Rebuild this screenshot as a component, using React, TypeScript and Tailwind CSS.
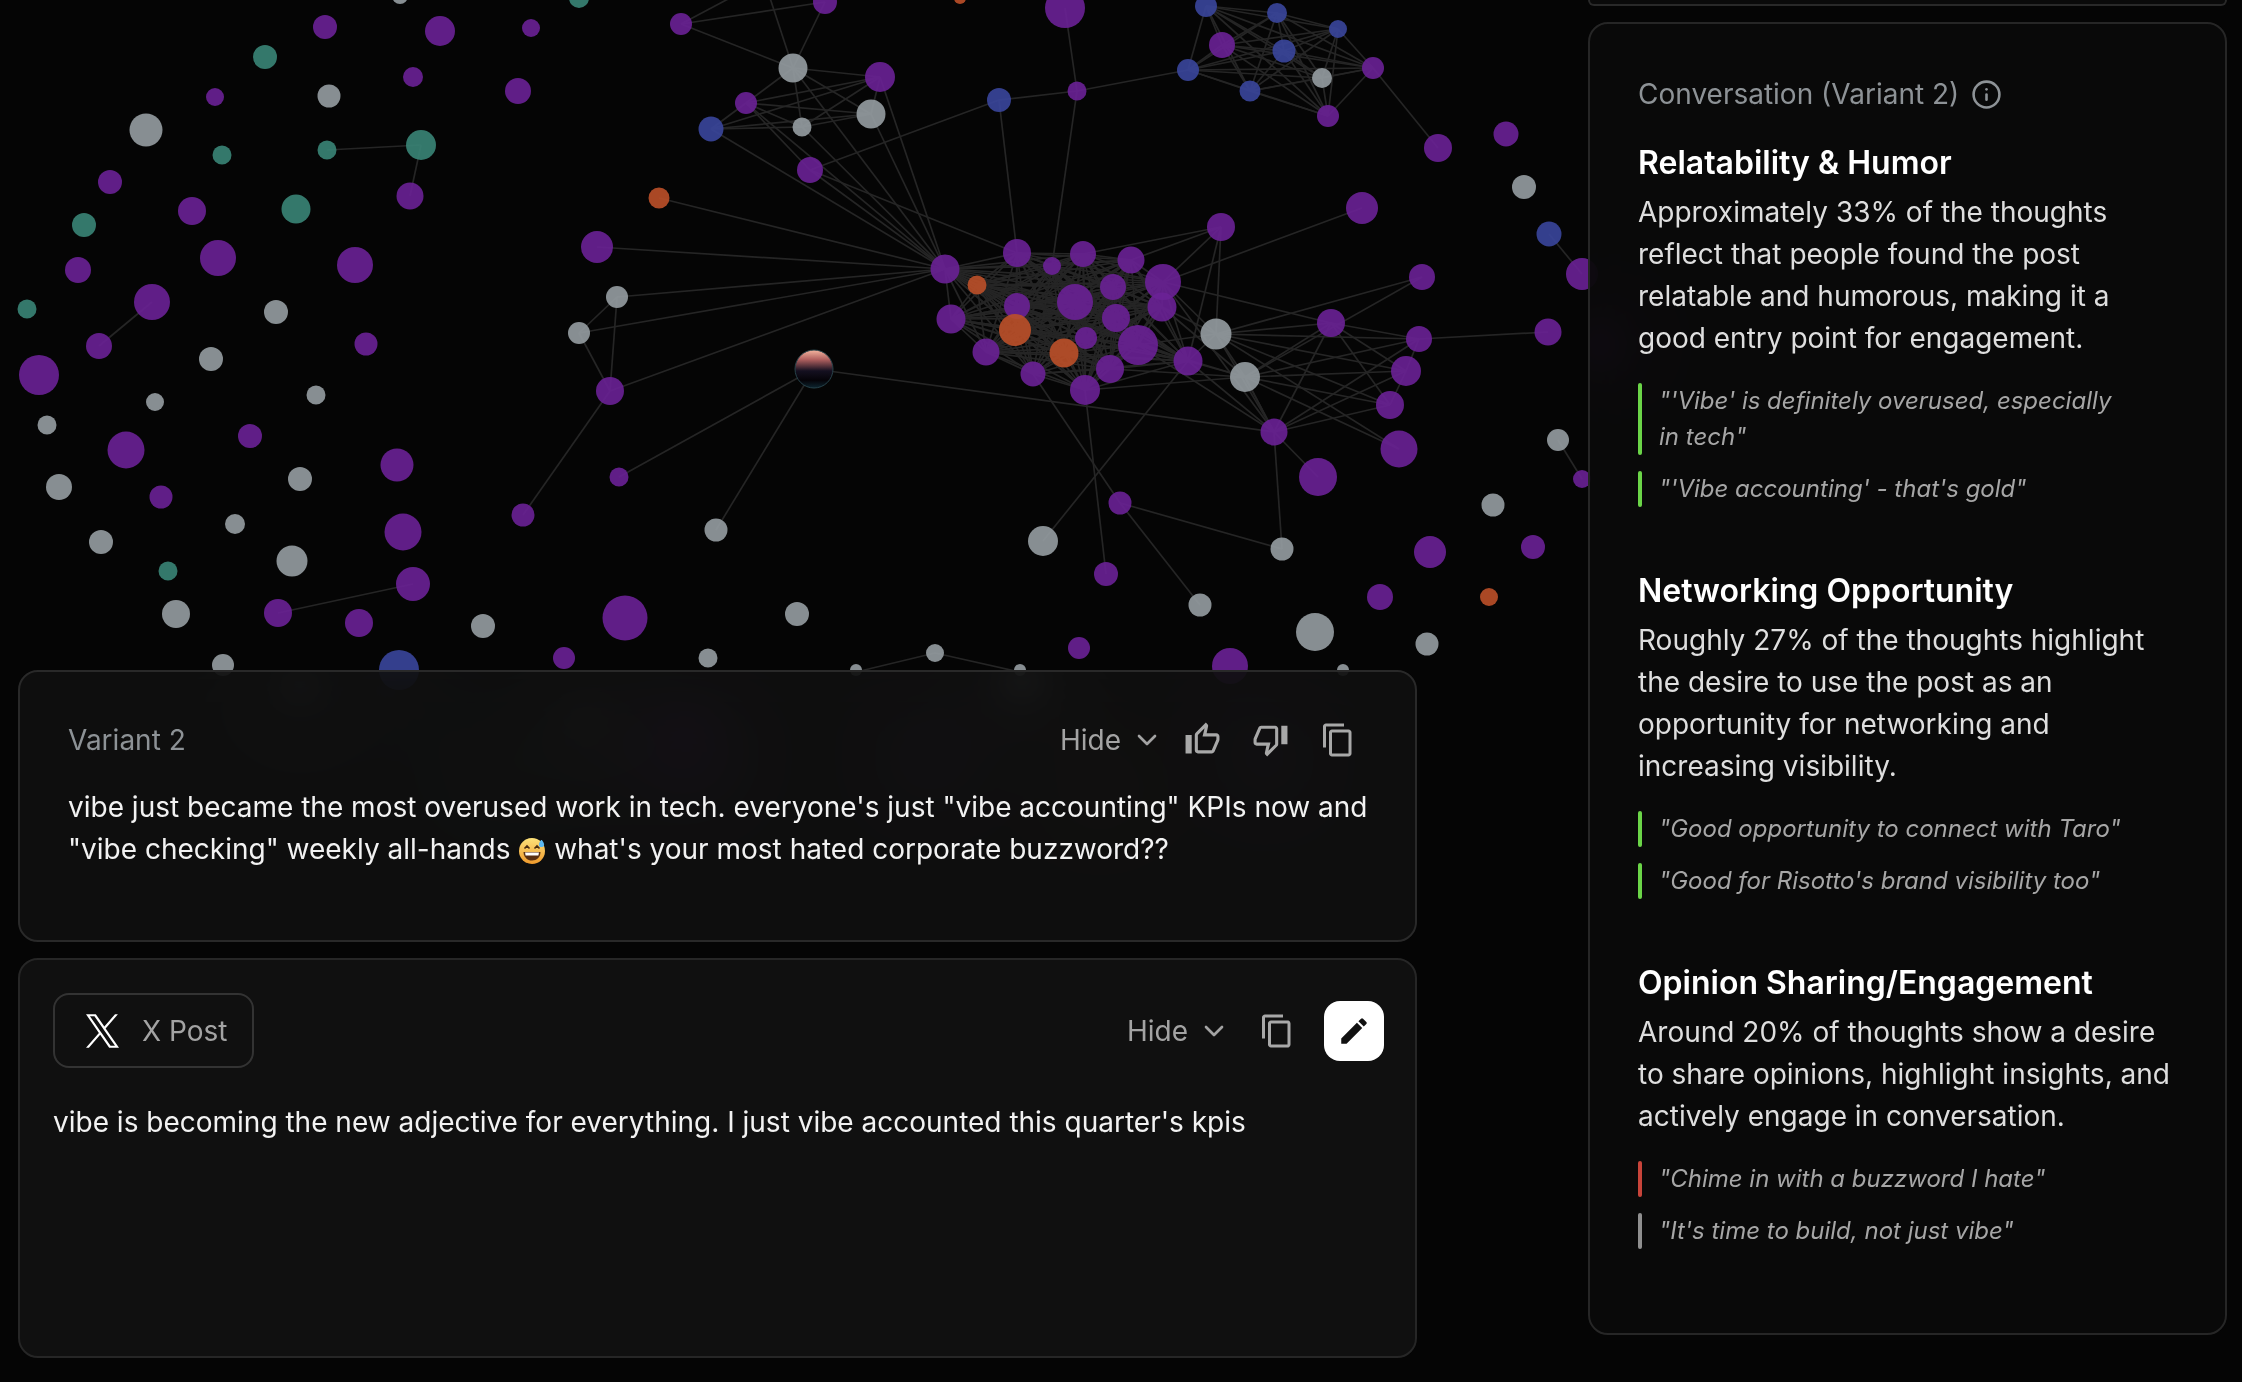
import { ChevronDown, Info } from "lucide-react";
import {
  MdContentCopy,
  MdEdit,
  MdOutlineThumbDown,
  MdOutlineThumbUp,
} from "react-icons/md";

const fills: Record<string, string> = {
  p: "#6a2196",
  g: "#969da2",
  t: "#3a8577",
  b: "#3a469c",
  o: "#bc5029",
};

type GraphNode = [number, number, number, string];

const loose: GraphNode[] = [
  [400, -4, 8, "g"], [579, -2, 10, "t"], [825, 2, 12, "p"], [960, -2, 6, "o"], [1065, 8, 20, "p"],
  [325, 27, 12, "p"], [440, 31, 15, "p"], [531, 28, 9, "p"], [265, 57, 12, "t"], [413, 77, 10, "p"],
  [518, 91, 13, "p"], [215, 97, 9, "p"], [329, 96, 11.5, "g"], [146, 130, 16.5, "g"], [222, 155, 9.5, "t"],
  [327, 150, 9.5, "t"], [421, 145, 15, "t"], [410, 196, 13.5, "p"], [110, 182, 12, "p"], [84, 225, 12, "t"],
  [192, 211, 14, "p"], [296, 209, 14.5, "t"], [78, 270, 13, "p"], [218, 258, 18, "p"], [355, 265, 18, "p"],
  [27, 309, 9.5, "t"], [152, 302, 18, "p"], [276, 312, 12, "g"], [99, 346, 13, "p"], [366, 344, 11.5, "p"],
  [39, 375, 20, "p"], [211, 359, 12, "g"], [155, 402, 9, "g"], [316, 395, 9.5, "g"], [47, 425, 9.5, "g"],
  [250, 436, 12, "p"], [126, 450, 18.5, "p"], [59, 487, 13, "g"], [161, 497, 11.5, "p"], [300, 479, 12, "g"],
  [397, 465, 16.5, "p"], [235, 524, 10, "g"], [101, 542, 12, "g"], [403, 532, 18.5, "p"], [168, 571, 9.5, "t"],
  [292, 561, 15.5, "g"], [413, 584, 17, "p"], [176, 614, 14, "g"], [278, 613, 14, "p"], [359, 623, 14, "p"],
  [483, 626, 12, "g"], [625, 618, 22.5, "p"], [797, 614, 12, "g"], [223, 665, 11, "g"], [399, 670, 20, "b"],
  [564, 658, 11, "p"], [708, 658, 9.5, "g"], [597, 247, 16, "p"], [659, 198, 10.5, "o"], [617, 297, 11, "g"],
  [579, 333, 11, "g"], [610, 391, 14, "p"], [619, 477, 9.5, "p"], [523, 515, 11.5, "p"], [716, 530, 11.5, "g"],
  [999, 100, 12, "b"], [1077, 91, 9.5, "p"], [1438, 148, 14, "p"], [1506, 134, 12.5, "p"], [1524, 187, 12, "g"],
  [1549, 234, 12.5, "b"], [1582, 274, 16, "p"], [1362, 208, 16, "p"], [1548, 332, 13.5, "p"], [1558, 440, 11, "g"],
  [1582, 479, 9, "p"], [1493, 505, 11.5, "g"], [1120, 503, 11.5, "p"], [1043, 541, 15, "g"], [1282, 549, 11.5, "g"],
  [1106, 574, 12, "p"], [1200, 605, 11.5, "g"], [1430, 552, 16, "p"], [1533, 547, 12, "p"], [1380, 597, 13, "p"],
  [1489, 597, 9, "o"], [1315, 632, 19, "g"], [1427, 644, 11.5, "g"], [935, 653, 9, "g"], [1079, 648, 11, "p"],
  [1230, 666, 18, "p"], [856, 670, 6, "g"], [1020, 670, 6, "g"], [1343, 670, 6, "g"],
  [681, 24, 11, "p"], [711, 129, 12.5, "b"], [746, 103, 11, "p"], [793, 68, 14.5, "g"],
  [802, 127, 9.5, "g"], [810, 170, 13, "p"], [880, 77, 15, "p"], [871, 114, 14.5, "g"],
  [1216, 334, 15.5, "g"], [1245, 377, 15, "g"], [1331, 323, 14, "p"], [1422, 277, 13, "p"], [1419, 339, 13, "p"],
  [1406, 371, 15, "p"], [1390, 405, 14, "p"], [1399, 449, 18.5, "p"], [1274, 432, 13.5, "p"], [1318, 477, 19, "p"],
  [1221, 227, 14, "p"],
];

// only seen blurred, through the cards and the side panel
const behindCards: GraphNode[] = [
  [686, 750, 30, "p"], [586, 735, 18, "g"], [930, 758, 22, "p"], [1022, 690, 18, "g"], [300, 695, 14, "g"],
  [490, 772, 14, "t"], [1265, 760, 20, "p"], [1100, 790, 16, "o"], [1610, 345, 26, "p"],
];

const topRight: GraphNode[] = [
  [1206, 6, 11, "b"], [1277, 13, 10, "b"], [1338, 29, 9, "b"], [1222, 45, 13, "p"], [1284, 51, 11.5, "b"],
  [1188, 70, 11, "b"], [1373, 68, 11, "p"], [1322, 78, 10, "g"], [1250, 91, 10.5, "b"], [1328, 116, 11, "p"],
];

const center: GraphNode[] = [
  [945, 269, 14.5, "p"], [1017, 253, 14, "p"], [1052, 266, 9, "p"], [1083, 254, 13, "p"], [1131, 260, 13.5, "p"],
  [1163, 282, 18, "p"], [977, 285, 9.5, "o"], [1113, 287, 13, "p"], [1075, 302, 18, "p"], [1017, 306, 13, "p"],
  [1162, 307, 14.5, "p"], [951, 319, 14.5, "p"], [1015, 330, 16, "o"], [1116, 318, 14, "p"], [1086, 338, 11, "p"],
  [1138, 345, 20, "p"], [986, 352, 13.5, "p"], [1064, 353, 14.5, "o"], [1188, 361, 14.5, "p"], [1110, 369, 14, "p"],
  [1033, 374, 12.5, "p"], [1085, 390, 15, "p"],
];

// [x1, y1, x2, y2]
const links = [
  [327, 150, 421, 145], [421, 145, 410, 196], [152, 302, 99, 346], [278, 613, 413, 584],
  [659, 198, 945, 269], [597, 247, 945, 269], [617, 297, 945, 269], [579, 333, 945, 269],
  [579, 333, 617, 297], [617, 297, 610, 391], [579, 333, 610, 391], [610, 391, 945, 269],
  [610, 391, 523, 515], [814, 369, 619, 477], [814, 369, 716, 530], [814, 369, 1274, 432],
  // top left group
  [681, 24, 730, -2], [681, 24, 825, 2], [681, 24, 793, 68], [793, 68, 770, -2], [793, 68, 825, 2],
  [793, 68, 880, 77], [793, 68, 746, 103], [793, 68, 802, 127], [793, 68, 871, 114], [793, 68, 945, 269],
  [880, 77, 746, 103], [880, 77, 711, 129], [880, 77, 802, 127], [880, 77, 871, 114], [880, 77, 945, 269],
  [746, 103, 711, 129], [746, 103, 802, 127], [746, 103, 871, 114], [746, 103, 810, 170], [746, 103, 945, 269],
  [711, 129, 802, 127], [711, 129, 871, 114], [711, 129, 945, 269], [802, 127, 871, 114], [802, 127, 945, 269],
  [871, 114, 945, 269], [810, 170, 945, 269], [810, 170, 1017, 253], [810, 170, 999, 100],
  [999, 100, 1017, 253], [999, 100, 1077, 91], [1077, 91, 1052, 266],
  [1077, 91, 1188, 70], [1065, 8, 1077, 91],
  // right group
  [1216, 334, 1245, 377], [1216, 334, 1274, 432], [1245, 377, 1274, 432], [1245, 377, 1274, 432],
  [1216, 334, 1331, 323], [1245, 377, 1331, 323], [1331, 323, 1274, 432], [1216, 334, 1422, 277],
  [1245, 377, 1422, 277], [1216, 334, 1419, 339], [1245, 377, 1419, 339], [1331, 323, 1419, 339],
  [1274, 432, 1419, 339], [1216, 334, 1406, 371], [1245, 377, 1406, 371], [1331, 323, 1406, 371],
  [1274, 432, 1406, 371], [1216, 334, 1390, 405], [1245, 377, 1390, 405], [1331, 323, 1390, 405],
  [1274, 432, 1390, 405], [1216, 334, 1399, 449], [1245, 377, 1399, 449], [1419, 339, 1406, 371],
  [1406, 371, 1390, 405], [1274, 432, 1318, 477],
  [1221, 227, 1131, 260], [1221, 227, 1216, 334],
  [1221, 227, 1163, 282], [1221, 227, 1083, 254], [1221, 227, 1188, 361], [1362, 208, 1163, 282],
  [1373, 68, 1438, 148], [1419, 339, 1548, 332], [1549, 234, 1582, 274], [1558, 440, 1582, 479],
  [1033, 374, 1120, 503], [1085, 390, 1106, 574], [1188, 361, 1043, 541], [1120, 503, 1282, 549],
  [1120, 503, 1200, 605], [1274, 432, 1282, 549], [935, 653, 856, 672],
  [935, 653, 1020, 672], [1163, 282, 1331, 323], [1085, 390, 1245, 377], [1138, 345, 1216, 334],
  [1138, 345, 1245, 377], [1188, 361, 1216, 334], [1188, 361, 1245, 377], [1162, 307, 1216, 334],
  [1162, 307, 1245, 377], [1163, 282, 1216, 334], [1188, 361, 1274, 432], [1110, 369, 1245, 377],
  [1163, 282, 1274, 432], [1138, 345, 1274, 432],
];

function cliqueLinks(group: GraphNode[]) {
  const out: number[][] = [];
  group.forEach((a, i) => {
    group.slice(i + 1).forEach((b) => out.push([a[0], a[1], b[0], b[1]]));
  });
  return out;
}

function Graph() {
  const allLinks = [...cliqueLinks(topRight), ...cliqueLinks(center), ...links];
  const allNodes = [...loose, ...topRight, ...center];
  return (
    <svg className="absolute inset-0" width="2242" height="1382" viewBox="0 0 2242 1382">
      <defs>
        <linearGradient id="activeNode" x1="0" y1="0" x2="0" y2="1">
          <stop offset="0" stopColor="#f5b6a0" />
          <stop offset="0.25" stopColor="#b0605f" />
          <stop offset="0.55" stopColor="#141020" />
          <stop offset="0.8" stopColor="#050308" />
          <stop offset="1" stopColor="#0d2530" />
        </linearGradient>
        <filter id="soft" x="-200%" y="-200%" width="500%" height="500%">
          <feGaussianBlur stdDeviation="16" />
        </filter>
        <clipPath id="cardAreas">
          <rect x="18" y="672" width="1399" height="270" />
          <rect x="1588" y="22" width="639" height="1312" />
        </clipPath>
      </defs>
      {allLinks.map((l, i) => (
        <line key={i} x1={l[0]} y1={l[1]} x2={l[2]} y2={l[3]} stroke="#252525" strokeWidth="1.7" />
      ))}
      {allNodes.map((n, i) => (
        <circle key={i} cx={n[0]} cy={n[1]} r={n[2]} fill={fills[n[3]]} fillOpacity="0.9" />
      ))}
      <g clipPath="url(#cardAreas)">
        <g filter="url(#soft)">
          {behindCards.map((n, i) => (
            <circle key={i} cx={n[0]} cy={n[1]} r={n[2]} fill={fills[n[3]]} />
          ))}
        </g>
      </g>
      <circle cx={814} cy={369} r={19} fill="url(#activeNode)" stroke="#27424a" strokeWidth="1" />
    </svg>
  );
}

function XLogo() {
  return (
    <svg width="33" height="34" viewBox="0 0 1200 1227" fill="#ffffff">
      <path d="M714.163 519.284L1160.89 0H1055.03L667.137 450.887L357.328 0H0L468.492 681.821L0 1226.37H105.866L515.491 750.218L842.672 1226.37H1200L714.137 519.284H714.163ZM569.165 687.828L521.697 619.934L144.011 79.6944H306.615L611.412 515.685L658.88 583.579L1055.08 1150.3H892.476L569.165 687.854V687.828Z" />
    </svg>
  );
}

function SweatSmile() {
  return (
    <svg className="mx-[1px] inline-block align-[-5px]" width="26" height="26" viewBox="0 0 26 26" role="img" aria-label="grinning face with sweat">
      <defs>
        <linearGradient id="emojiFace" x1="0" y1="0" x2="0" y2="1">
          <stop offset="0" stopColor="#fde27a" />
          <stop offset="1" stopColor="#f09a2c" />
        </linearGradient>
      </defs>
      <circle cx="13" cy="13" r="13" fill="url(#emojiFace)" />
      <path d="M5.5 10.5l2.5-2.5 2.5 2.5M15.5 10.5l2.5-2.5 2.5 2.5" fill="none" stroke="#4a2c10" strokeWidth="1.6" />
      <path d="M4.5 14h17c0 5-3.8 8.5-8.5 8.5S4.5 19 4.5 14z" fill="#5a2f12" />
      <path d="M6 14.5h14l-.6 3H6.6z" fill="#fff" />
      <path d="M22.5 1.5c-1.6 2.4-2.6 3.6-2.6 5a2.6 2.6 0 0 0 5.2 0c0-1.4-1-2.6-2.6-5z" fill="#5cb8f0" />
    </svg>
  );
}

function HideToggle() {
  return (
    <div className="flex items-center gap-[10px] text-[28px] leading-[42px] text-[#a3a3a3]">
      <span>Hide</span>
      <ChevronDown size={32} strokeWidth={2} />
    </div>
  );
}

function Quote({ color, children }: { color: string; children: string }) {
  return (
    <div className="flex gap-[17px]">
      <div className={`w-[4px] shrink-0 rounded-full ${color}`} />
      <p className="pr-[40px] text-[24px] leading-[36px] italic text-[#a6a6a6]">{children}</p>
    </div>
  );
}

const sections = [
  {
    title: "Relatability & Humor",
    body: "Approximately 33% of the thoughts reflect that people found the post relatable and humorous, making it a good entry point for engagement.",
    quotes: [
      { color: "bg-[#6bd548]", text: "\"'Vibe' is definitely overused, especially in tech\"" },
      { color: "bg-[#6bd548]", text: "\"'Vibe accounting' - that's gold\"" },
    ],
  },
  {
    title: "Networking Opportunity",
    body: "Roughly 27% of the thoughts highlight the desire to use the post as an opportunity for networking and increasing visibility.",
    quotes: [
      { color: "bg-[#6bd548]", text: "\"Good opportunity to connect with Taro\"" },
      { color: "bg-[#6bd548]", text: "\"Good for Risotto's brand visibility too\"" },
    ],
  },
  {
    title: "Opinion Sharing/Engagement",
    body: "Around 20% of thoughts show a desire to share opinions, highlight insights, and actively engage in conversation.",
    quotes: [
      { color: "bg-[#c8443a]", text: "\"Chime in with a buzzword I hate\"" },
      { color: "bg-[#8f8f8f]", text: "\"It's time to build, not just vibe\"" },
    ],
  },
];

export default function App() {
  return (
    <div className="relative flex h-[1382px] w-[2242px] justify-between overflow-hidden bg-[#050505] font-[family-name:Inter,sans-serif]">
      <Graph />

      {/* Left column */}
      <div className="relative flex w-[1417px] flex-col justify-end gap-[16px] pb-[24px] pl-[18px]">
        <div className="h-[272px] rounded-[20px] border-2 border-[#292929] bg-[#111111]/85 pr-[40px] pl-[48px] backdrop-blur-2xl">
          <div className="flex h-[114px] items-center justify-between pt-[21px] pr-[19px]">
            <span className="text-[28px] leading-[42px] text-[#8d9296]">Variant 2</span>
            <div className="flex items-center text-[#a8a8a8]">
              <HideToggle />
              <MdOutlineThumbUp size={37} className="ml-[21px]" />
              <MdOutlineThumbDown size={37} className="ml-[31px]" />
              <MdContentCopy size={36} className="ml-[31px]" />
            </div>
          </div>
          <p className="text-[28px] leading-[42px] text-[#f2f2f2]">
            vibe just became the most overused work in tech. everyone's just "vibe accounting" KPIs now and
            "vibe checking" weekly all-hands <SweatSmile /> what's your most hated corporate buzzword??
          </p>
        </div>

        <div className="h-[400px] rounded-[20px] border-2 border-[#262626] bg-[#111111]/95 pt-[33px] pr-[31px] pl-[33px] backdrop-blur-2xl">
          <div className="flex items-center justify-between">
            <div className="flex h-[75px] w-[201px] items-center gap-[23px] rounded-[16px] border-2 border-[#333333] pl-[31px]">
              <XLogo />
              <span className="text-[28px] leading-[42px] text-[#a3a3a3]">X Post</span>
            </div>
            <div className="flex items-center text-[#a8a8a8]">
              <HideToggle />
              <MdContentCopy size={36} className="ml-[29px]" />
              <div className="ml-[29px] flex h-[60px] w-[60px] items-center justify-center rounded-[16px] bg-white">
                <MdEdit size={34} className="text-[#111111]" />
              </div>
            </div>
          </div>
          <p className="mt-[33px] text-[28px] leading-[42px] text-[#f2f2f2]">
            vibe is becoming the new adjective for everything. I just vibe accounted this quarter's kpis
          </p>
        </div>
      </div>

      {/* Right column */}
      <div className="relative mr-[15px] flex w-[639px] flex-col gap-[16px]">
        <div className="h-[6px] rounded-b-[16px] border-x-2 border-b-2 border-[#292929] bg-[#0a0a0a]" />
        <div className="h-[1313px] rounded-[20px] border-2 border-[#262626] bg-[#0a0a0a]/90 pt-[49px] pr-[49px] pl-[48px] backdrop-blur-2xl">
          <div className="flex items-center gap-[12px]">
            <span className="text-[28px] leading-[42px] text-[#8d9296]">Conversation (Variant 2)</span>
            <Info size={31} className="text-[#8d9296]" />
          </div>
          <div className="mt-[27px] flex flex-col gap-[63px]">
            {sections.map((section) => (
              <div key={section.title}>
                <h3 className="text-[32px] leading-[42px] font-semibold text-white">{section.title}</h3>
                <p className="mt-[7px] text-[28px] leading-[42px] text-[#dedede]">{section.body}</p>
                <div className="mt-[24px] flex flex-col gap-[16px]">
                  {section.quotes.map((quote) => (
                    <Quote key={quote.text} color={quote.color}>
                      {quote.text}
                    </Quote>
                  ))}
                </div>
              </div>
            ))}
          </div>
        </div>
      </div>
    </div>
  );
}
